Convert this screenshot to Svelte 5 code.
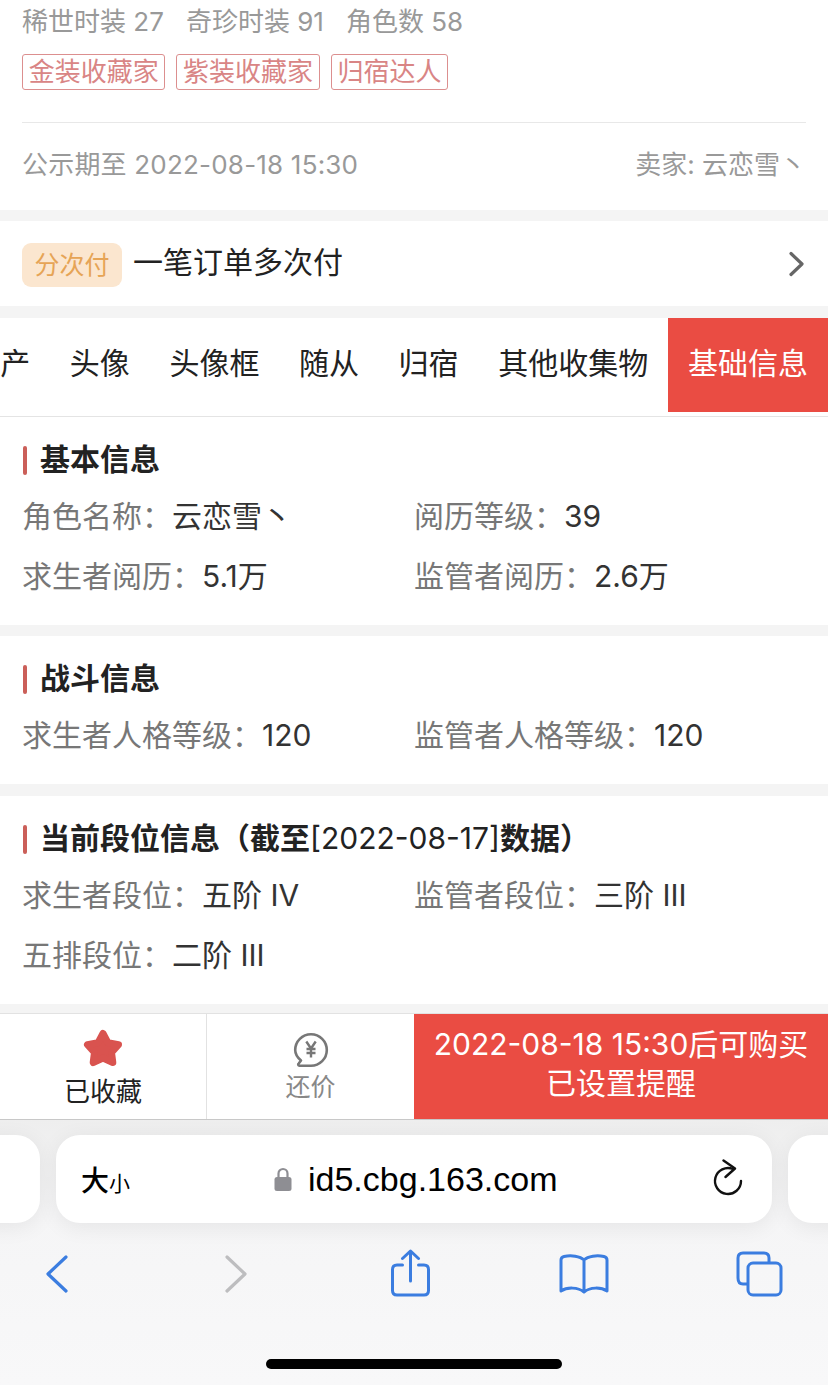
<script>
  const stats = [["稀世时装", 27], ["奇珍时装", 91], ["角色数", 58]];
  const badges = ["金装收藏家", "紫装收藏家", "归宿达人"];
  const tabs = ["产", "头像", "头像框", "随从", "归宿", "其他收集物", "基础信息"];
  const sections = [
    {
      title: "基本信息",
      rows: [
        ["角色名称：", "云恋雪丶"],
        ["阅历等级：", "39"],
        ["求生者阅历：", "5.1万"],
        ["监管者阅历：", "2.6万"],
      ],
    },
    {
      title: "战斗信息",
      rows: [
        ["求生者人格等级：", "120"],
        ["监管者人格等级：", "120"],
      ],
    },
    {
      title: "当前段位信息（截至",
      date: "[2022-08-17]",
      tail: "数据）",
      rows: [
        ["求生者段位：", "五阶 IV"],
        ["监管者段位：", "三阶 III"],
        ["五排段位：", "二阶 III"],
      ],
    },
  ];
</script>

<div class="page" lang="zh-CN">
  <section class="summary">
    <div class="stats">
      {#each stats as [name, n]}
        <span>{name} {n}</span>
      {/each}
    </div>
    <div class="badges">
      {#each badges as b}
        <span class="badge">{b}</span>
      {/each}
    </div>
    <div class="notice">
      <span class="date">公示期至 2022-08-18 15:30</span>
      <span>卖家: 云恋雪丶</span>
    </div>
  </section>

  <section class="instalment">
    <span class="pill">分次付</span>
    <span class="inst-text">一笔订单多次付</span>
    <svg class="chev" width="18" height="26" viewBox="0 0 18 26">
      <path d="M3 2.500 14 13 3 23.500" fill="none" stroke="#666" stroke-width="3.200" stroke-linecap="round" stroke-linejoin="round" />
    </svg>
  </section>

  <nav class="tabs">
    {#each tabs as t, i}
      <span class="tab" class:active={i === tabs.length - 1}>{t}</span>
    {/each}
  </nav>

  {#each sections as s}
    <section class="info">
      <h2><span>{s.title}<span class="plain">{s.date ?? ""}</span>{s.tail ?? ""}</span></h2>
      <div class="rows">
        {#each s.rows as [k, v]}
          <div class="row">{k}<span class="val">{v}</span></div>
        {/each}
      </div>
    </section>
  {/each}

  <footer class="actions">
    <div class="act fav">
      <svg width="42" height="40" viewBox="0 0 42 40">
        <path d="M21 5.500 26 14.800 36.500 16.700 29.500 24.500 30.800 34.500 21 30 11.200 34.500 12.500 24.500 5.500 16.700 16 14.800Z" fill="#d9534f" stroke="#d9534f" stroke-width="7" stroke-linejoin="round" />
      </svg>
      <span>已收藏</span>
    </div>
    <div class="act bargain">
      <svg width="36" height="36" viewBox="0 0 36 36">
        <path d="M8 28.500C4.500 25.600 2.200 22 2.200 18 2.200 9.300 9.300 2.200 18 2.200S33.800 9.300 33.800 18 26.700 33.800 18 33.800H6.500C5.200 33.800 4.700 32.300 5.700 31.500Z" fill="none" stroke="#777" stroke-width="2.600" stroke-linejoin="round" />
        <path d="M13.300 9.500 18 16.500 22.700 9.500M18 16.500V25.500M13.500 17H22.500M13.500 21H22.500" fill="none" stroke="#777" stroke-width="2.400" />
      </svg>
      <span>还价</span>
    </div>
    <div class="buy">
      <span>2022-08-18 15:30后可购买</span>
      <span>已设置提醒</span>
    </div>
  </footer>

  <div class="safari">
    <div class="pills">
      <div class="side"></div>
      <div class="url">
        <span class="aa"><b>大</b><small>小</small></span>
        <span class="host">
          <svg width="18" height="26" viewBox="0 0 18 26">
            <path d="M4.500 12V7.500a4.500 4.500 0 0 1 9 0V12" fill="none" stroke="#8e8e93" stroke-width="2.200" />
            <rect x="0.500" y="11" width="17" height="14" rx="2.500" fill="#8e8e93" />
          </svg>
          id5.cbg.163.com
        </span>
        <svg class="reload" width="32" height="38" viewBox="0 0 32 38">
          <path d="M21 10A13 13 0 1 0 29 22" fill="none" stroke="#111" stroke-width="2.400" stroke-linecap="round" />
          <path d="M11.500 1.500 23 9.500 13.500 18" fill="none" stroke="#111" stroke-width="2.400" stroke-linecap="round" stroke-linejoin="round" />
        </svg>
      </div>
      <div class="side"></div>
    </div>
    <div class="toolbar">
      <svg width="50" height="40" viewBox="0 0 50 40">
        <path d="M34 3 16 20 34 37" fill="none" stroke="#3b7de0" stroke-width="3.200" stroke-linecap="round" stroke-linejoin="round" />
      </svg>
      <svg width="50" height="40" viewBox="0 0 50 40">
        <path d="M19 3 37 20 19 37" fill="none" stroke="#bdbdbf" stroke-width="3.200" stroke-linecap="round" stroke-linejoin="round" />
      </svg>
      <svg width="50" height="50" viewBox="0 0 50 50">
        <path d="M18.500 16H13Q8.500 16 8.500 20.500V41.500Q8.500 46 13 46H40Q44.500 46 44.500 41.500V20.500Q44.500 16 40 16H34.500" fill="none" stroke="#3b7de0" stroke-width="3" stroke-linecap="round" />
        <path d="M26.500 32V2M18.500 9.500 26.500 2 34.500 9.500" fill="none" stroke="#3b7de0" stroke-width="3" stroke-linecap="round" stroke-linejoin="round" />
      </svg>
      <svg width="50" height="42" viewBox="0 0 50 42">
        <path d="M25 7C21 3 12 2 5 3.500 3 4 2 5 2 7V38C8 34 19 34 25 39 31 34 42 34 48 38V7C48 5 47 4 45 3.500 38 2 29 3 25 7ZM25 7V39" fill="none" stroke="#3b7de0" stroke-width="3" stroke-linejoin="round" />
      </svg>
      <svg width="50" height="46" viewBox="0 0 50 46">
        <path d="M34 13V7Q34 2 29 2H8Q3 2 3 7V27Q3 33 8 33H13" fill="none" stroke="#3b7de0" stroke-width="3" />
        <rect x="13" y="12" width="33" height="32" rx="5" fill="none" stroke="#3b7de0" stroke-width="3" />
      </svg>
    </div>
    <div class="home"></div>
  </div>
</div>

<style>
  :global(body) {
    margin: 0;
    background: #f4f4f4;
  }
  .page {
    width: 828px;
    height: 1385px;
    overflow: hidden;
    font-family: Inter, "Noto Sans CJK SC", sans-serif;
    color: #222;
  }
  section {
    background: #fff;
  }

  .summary {
    height: 210px;
    padding: 0 22px;
    box-sizing: border-box;
    color: #999;
    font-size: 26px;
  }
  .stats {
    display: flex;
    gap: 22px;
    height: 44px;
    line-height: 44px;
    white-space: nowrap;
  }
  .badges {
    display: flex;
    gap: 11px;
    margin-top: 10px;
  }
  .badge {
    height: 36px;
    line-height: 34px;
    box-sizing: border-box;
    padding: 0 5.700px;
    border: 1px solid #dc8f8f;
    border-radius: 3px;
    color: #d98585;
    font-size: 26px;
  }
  .notice {
    display: flex;
    justify-content: space-between;
    margin-top: 32px;
    padding-top: 22px;
    border-top: 1px solid #e8e8e8;
    line-height: 40px;
  }
  .date {
    letter-spacing: 0.2px;
  }

  .instalment {
    display: flex;
    align-items: center;
    height: 85px;
    margin-top: 11px;
    padding: 0 22px;
  }
  .pill {
    width: 100px;
    height: 44px;
    margin-top: 2px;
    line-height: 44px;
    text-align: center;
    border-radius: 9px;
    background: #fbe6cf;
    color: #e6a456;
    font-size: 25px;
  }
  .inst-text {
    margin: -7px 0 0 11px;
    font-size: 30px;
    color: #222;
  }
  .chev {
    margin-left: auto;
  }

  .tabs {
    display: flex;
    justify-content: flex-end;
    height: 99px;
    margin-top: 12px;
    background: #fff;
    border-bottom: 1px solid #e4e4e4;
    box-sizing: border-box;
    overflow: hidden;
  }
  .tab {
    flex: none;
    height: 94px;
    line-height: 90px;
    padding: 0 19.800px;
    font-size: 30px;
    color: #222;
    white-space: nowrap;
  }
  .tab.active {
    padding: 0 20px;
    background: #ea4c43;
    color: #fff;
  }

  .info {
    padding: 24px 23px 18px;
    margin-bottom: 11px;
  }
  .info + .info + .info {
    margin-top: 12px;
    margin-bottom: 0;
  }
  h2 {
    display: flex;
    align-items: center;
    gap: 13px;
    margin: 0 0 8px;
    height: 38px;
    line-height: 38px;
    font-size: 30px;
    font-weight: 700;
    color: #222;
    white-space: nowrap;
  }
  h2 > span {
    margin-top: -2px;
  }
  h2::before {
    content: "";
    width: 4px;
    height: 29px;
    margin-top: 1px;
    border-radius: 2px;
    background: #cb5f59;
  }
  .plain {
    font-weight: 400;
  }
  .rows {
    display: grid;
    grid-template-columns: 392px 1fr;
    grid-auto-rows: 60px;
  }
  .row {
    line-height: 58px;
    margin-left: -1px;
    font-size: 30px;
    color: #777;
    white-space: nowrap;
  }
  .val {
    color: #333;
  }

  .actions {
    display: flex;
    height: 107px;
    margin-top: 9px;
    background: #fff;
    border-top: 1px solid #e2e2e2;
    border-bottom: 1px solid #c8c8c8;
    box-sizing: border-box;
  }
  .act {
    width: 207px;
    box-sizing: border-box;
    display: flex;
    flex-direction: column;
    align-items: center;
  }
  .fav {
    padding-top: 14px;
    color: #222;
    font-size: 26px;
    border-right: 1px solid #e2e2e2;
  }
  .fav span {
    line-height: 36px;
    margin-top: 6px;
  }
  .bargain {
    padding-top: 18px;
    color: #888;
    font-size: 25px;
  }
  .bargain span {
    line-height: 36px;
    margin-top: 1px;
  }
  .buy {
    flex: 1;
    display: flex;
    flex-direction: column;
    justify-content: center;
    align-items: center;
    padding-bottom: 5px;
    box-sizing: border-box;
    background: #ea4c43;
    color: #fff;
    font-size: 30px;
    line-height: 39px;
    white-space: nowrap;
  }

  .safari {
    height: 265px;
    background: linear-gradient(#eeeeee 0, #f5f5f6 90px, #f8f8f9 100%);
    overflow: hidden;
  }
  .pills {
    display: flex;
    justify-content: center;
    gap: 16px;
    padding-top: 15px;
  }
  .side,
  .url {
    height: 88px;
    border-radius: 24px;
    background: #fff;
    box-shadow: 0 4px 22px rgba(0, 0, 0, 0.07);
  }
  .side {
    flex: none;
    width: 100px;
  }
  .url {
    flex: none;
    width: 716px;
    box-sizing: border-box;
    padding: 0 28px 0 25px;
    display: flex;
    align-items: center;
    color: #000;
    font-family: "Liberation Sans", sans-serif;
  }
  .aa {
    width: 163px;
    white-space: nowrap;
    font-family: "Noto Sans CJK SC", sans-serif;
    font-size: 28px;
    line-height: 1;
  }
  .aa b {
    font-weight: 500;
  }
  .aa small {
    font-size: 21px;
  }
  .host {
    display: flex;
    align-items: center;
    gap: 16px;
    font-size: 34px;
    margin-left: 30px;
    white-space: nowrap;
  }
  .reload {
    margin-left: auto;
    margin-top: -2px;
  }
  .toolbar {
    display: flex;
    justify-content: space-between;
    align-items: center;
    height: 60px;
    margin-top: 21px;
    padding: 0 43px 0 32px;
  }
  .home {
    width: 296px;
    height: 10px;
    margin: 55px auto 0;
    border-radius: 5px;
    background: #000;
  }
</style>
